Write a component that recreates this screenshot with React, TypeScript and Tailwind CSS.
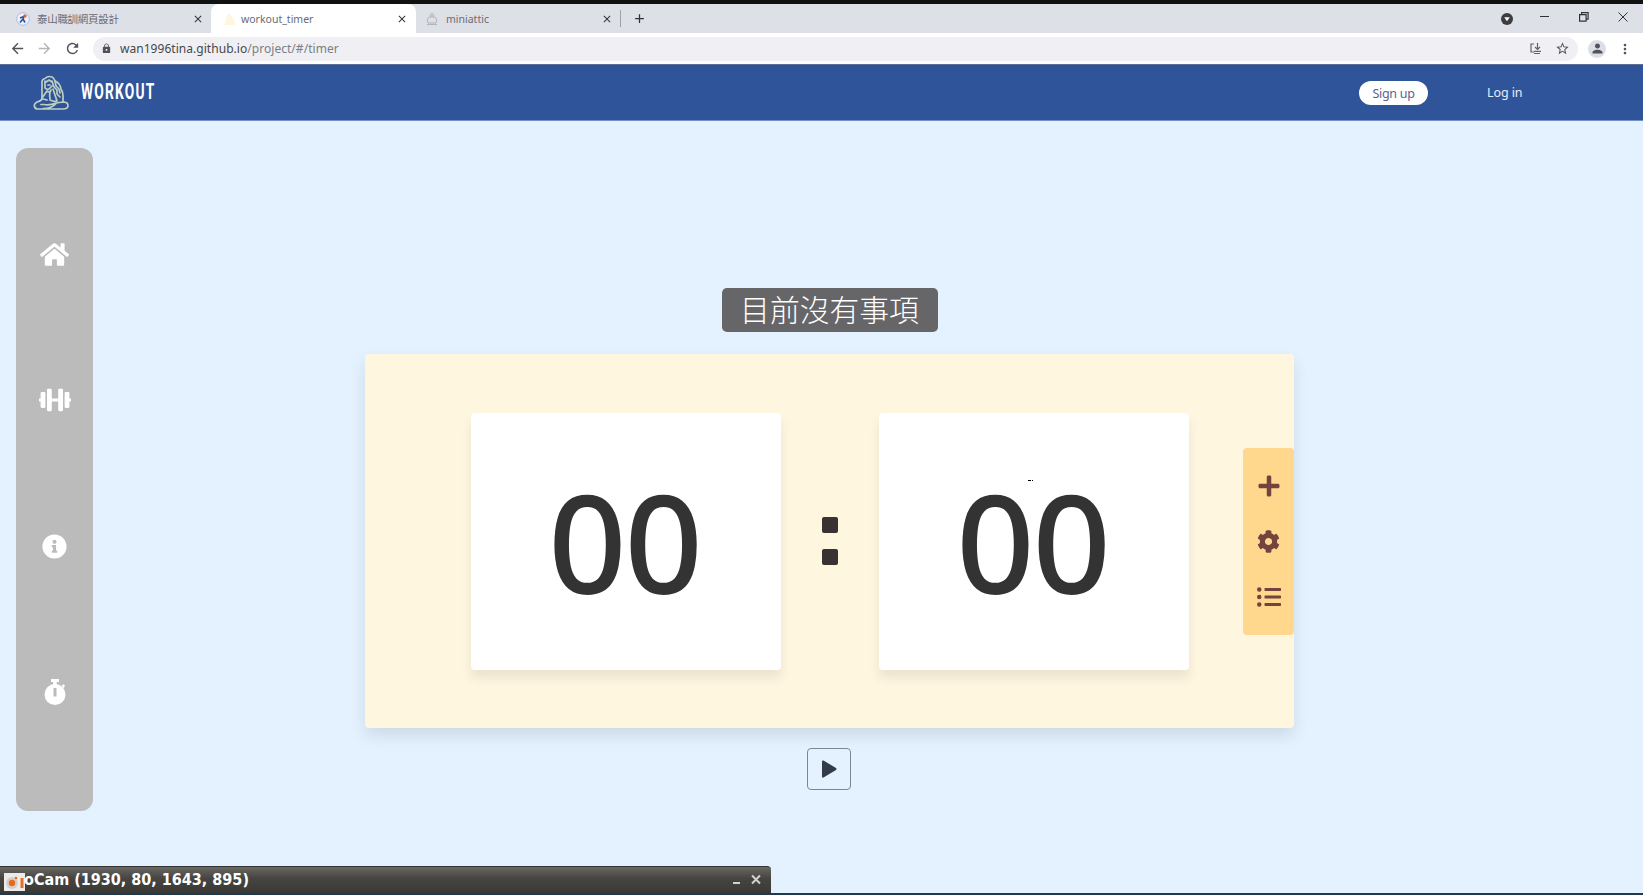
import React from 'react';
import { FaHome, FaDumbbell, FaInfoCircle, FaPlus, FaCog, FaListUl } from 'react-icons/fa';
import { MdArrowBack, MdArrowForward, MdRefresh, MdLock, MdStarBorder, MdPerson, MdMoreVert, MdClose, MdAdd } from 'react-icons/md';

const Stopwatch = () => (
  <svg width="22" height="26" viewBox="0 0 22 26" fill="#fff">
    <path d="M7 0h8v3h-2.200v3H9.200V3H7z" />
    <path d="M17.600 6.200l2.200-1 1.200 1.800-1.600 2.200z" />
    <path fillRule="evenodd" d="M11 5a10.500 10.500 0 1 1 0 21a10.500 10.500 0 1 1 0-21zM9.500 9v8.500h3V9z" />
  </svg>
);

const Logo = () => (
  <svg width="36" height="36" viewBox="0 0 36 36" fill="none" stroke="#bccfc0" strokeWidth="1.700" strokeLinecap="round" strokeLinejoin="round">
    <path d="M9 23V7q0-3 3-3.500Q15 .5 19 2q2 1 3 4 5 2 6 8 2 3 2 7v6" />
    <path d="M12 6v7q2 2 4 1l3-3M13 7l3-2 3 2M15 10h2M19 6l2 6 3 3v4l3 3M22 6l1 5 3 3 1 4" />
    <path d="M18 15q-2 3-1 9M9 23l5-7 2 1M20 14l4 12M17 25q4 2 7 1M10 24l4 1" />
    <path d="M9 24q-1 2-5 3-3.500 2-2.500 4.500Q2 34 5 34h25q5 0 5-3.500 0-3.500-5-3.500l-7 1q-6 2.500-12 1.500H8M10 33.500q9 0 13-5" />
  </svg>
);

const side = [
  <FaHome size={29} />,
  <FaDumbbell size={32} />,
  <FaInfoCircle size={25} />,
  <Stopwatch />,
];

const tabText = "font-['Noto_Sans','Noto_Sans_CJK_TC',sans-serif] pt-[2px] text-[10.500px] leading-none text-[#6b6b72]";

function TabStrip() {
  return (
    <div className="flex h-[29px] shrink-0 bg-[#dee0e7]">
      <div className="flex w-[211px] items-center pl-4 pr-[7px]">
        <svg width="14" height="14" viewBox="0 0 14 14">
          <circle cx="7" cy="7" r="6.300" fill="#eef1fa" stroke="#a9bce6" />
          <path d="M4 10.500L7 7l2 3.500M4 6l4-1.500L7 7" stroke="#34538f" strokeWidth="1.600" fill="none" />
          <circle cx="9" cy="4" r="1.700" fill="#e2643b" />
        </svg>
        <span className={`${tabText} ml-[7px] flex-1 tracking-[-0.300px]`}>泰山職訓網頁設計</span>
        <MdClose size={12} className="text-[#333]" />
      </div>
      <div className="flex w-[205px] items-center rounded-t-lg bg-white pl-3 pr-2">
        <svg width="14" height="14" viewBox="0 0 14 14" fill="#fff6e0"><path d="M2 13V9l3-8 3 2 4 7v3z" /></svg>
        <span className={`${tabText} ml-1 flex-1`}>workout_timer</span>
        <MdClose size={12} className="text-[#333]" />
      </div>
      <div className="flex w-[204px] items-center pl-[10px] pr-[7px]">
        <svg width="12" height="14" viewBox="0 0 12 14" fill="none" stroke="#b3b3ba"><path d="M1 12.500h10M2 11q-2-4 1-6h6q3 2 1 6zM6 1L4 4h4z" /></svg>
        <span className={`${tabText} ml-2 flex-1`}>miniattic</span>
        <MdClose size={12} className="text-[#333]" />
      </div>
      <div className="h-[17px] w-px self-center bg-[#a0a0a8]" />
      <div className="flex flex-1 items-center pl-[11px]">
        <MdAdd size={15} className="text-[#333]" />
      </div>
      <div className="flex items-center pr-[15px] text-[#333]">
        <svg width="12" height="12" viewBox="0 0 12 12"><circle cx="6" cy="6" r="6" fill="#3c3c40" /><path d="M3.200 4.300h5.600L6 8.200z" fill="#fff" /></svg>
        <svg className="ml-[27px] mb-1" width="9" height="9" viewBox="0 0 9 9" stroke="#333"><path d="M0 4.500h9" /></svg>
        <svg className="ml-[30px] mb-1" width="10" height="10" viewBox="0 0 10 10" fill="none" stroke="#333" strokeWidth="1.200"><path d="M.6 2.600h6.500v6.500H.6zM2.600 2.500V.6h6.500v6.500H7.200" /></svg>
        <svg className="ml-[29px] mb-1" width="10" height="10" viewBox="0 0 10 10" stroke="#333"><path d="M.5.5l9 9M9.500.5l-9 9" /></svg>
      </div>
    </div>
  );
}

function AddressBar() {
  return (
    <div className="flex h-[31px] shrink-0 items-center bg-white pl-[9px] pr-[10px] text-[#505357]">
      <MdArrowBack size={17} />
      <MdArrowForward size={17} className="ml-[10px] text-[#b4b6ba]" />
      <MdRefresh size={17} className="ml-[11px]" />
      <div className="ml-[12px] flex h-[24px] flex-1 items-center rounded-full bg-[#f0f0f4] pl-[8px] pr-[8px]">
        <MdLock size={11} />
        <span className="ml-[8px] mt-px flex-1 font-['Noto_Sans',sans-serif] text-[12px] leading-none tracking-[0.040px] text-[#45474b]">
          wan1996tina.github.io<span className="text-[#7c7e83]">/project/#/timer</span>
        </span>
        <svg width="12" height="12" viewBox="0 0 12 12" fill="none" stroke="#606367" strokeWidth="1.200"><path d="M4 1H1v8h3M7.500 0v6M5 4l2.500 2.500L10 4M4 8.300h7M4 10.500h6" /></svg>
        <MdStarBorder size={15} className="ml-[13px]" />
      </div>
      <div className="ml-[10px] flex h-[18px] w-[18px] items-center justify-center rounded-full bg-[#dcdee5]">
        <MdPerson size={15} />
      </div>
      <MdMoreVert size={16} className="ml-[11px]" />
    </div>
  );
}

function Navbar() {
  return (
    <header className="flex h-[57px] shrink-0 items-center border-y border-t-[#5d6f98] border-b-[#6f8fc6] bg-[#30549a] pl-[33px] font-['Noto_Sans',sans-serif]">
      <Logo />
      <div className="ml-3 w-[1278px]">
        <div className="w-[90px] origin-left scale-x-[0.640] pb-[2px] font-['Roboto',sans-serif] text-[21.500px] font-bold leading-none tracking-[1.900px] text-white">WORKOUT</div>
      </div>
      <button className="mt-px flex h-[24px] w-[69px] items-center justify-center rounded-full bg-white pt-[2px] text-[12.500px] leading-none tracking-[-0.300px] text-[#5a6290]">Sign up</button>
      <span className="ml-[59px] mt-px text-[12.500px] leading-none tracking-[-0.100px] text-[#e6edf8]">Log in</span>
    </header>
  );
}

function Digits({ value }: { value: string }) {
  return (
    <div className="flex h-[257px] w-[310px] items-center justify-center rounded bg-white pr-[3px] shadow-[0_8px_12px_rgba(0,0,0,0.080)]">
      <span className="font-['Noto_Sans',sans-serif] text-[137px] font-medium leading-none tracking-[-2.100px] text-[#333]">{value}</span>
    </div>
  );
}

function Timer() {
  return (
    <section className="flex w-[929px] flex-col items-center">
      <div className="flex h-[44px] w-[216px] items-center justify-center rounded-[5px] bg-[#666668] pb-[3px] font-['Noto_Sans_CJK_TC',sans-serif] text-[29.800px] font-light leading-none text-white">目前沒有事項</div>
      <div className="mt-[22px] flex h-[374px] w-full items-center rounded bg-[#fff6e0] pl-[106px] shadow-[0_8px_16px_rgba(0,0,0,0.100)]">
        <Digits value="00" />
        <div className="flex w-[98px] flex-col items-center gap-[16px] pb-px">
          <div className="h-4 w-4 rounded-[2px] bg-[#383232]" />
          <div className="h-4 w-4 rounded-[2px] bg-[#383232]" />
        </div>
        <Digits value="00" />
        <div className="ml-auto flex h-[187px] w-[51px] flex-col items-center justify-between rounded bg-[#ffd78d] py-[26px] text-[#74433d]">
          <FaPlus size={24} />
          <FaCog size={23} />
          <FaListUl size={24} />
        </div>
      </div>
      <button className="mr-px mt-5 flex h-[42px] w-[44px] items-center justify-center rounded border border-[#7b8794]">
        <svg width="15" height="18" viewBox="0 0 15 18" fill="#323b48"><path d="M0 1.500Q0 0 1.500.5L14 8q1 1 0 2L1.500 17.500Q0 18 0 16.500z" /></svg>
      </button>
    </section>
  );
}

export default function App() {
  return (
    <div className="relative flex h-[895px] w-[1643px] flex-col overflow-hidden border-b-2 border-[#22384d] bg-[#e4f2ff]">
      <div className="h-1 shrink-0 bg-[#111]" />
      <TabStrip />
      <AddressBar />
      <Navbar />
      <main className="flex flex-1 pl-4 pt-[27px]">
        <nav className="flex h-[663px] w-[77px] flex-col items-center rounded-xl bg-[#bbb] pt-[33px] text-white">
          {side.map((icon, i) => (
            <a key={i} className="flex h-[146px] items-center">{icon}</a>
          ))}
        </nav>
        <div className="ml-[272px] mt-[140px]">
          <Timer />
        </div>
      </main>
      <div className="absolute left-[1028px] top-[480px] flex gap-px">
        <i className="h-px w-[3px] bg-black" />
        <i className="h-px w-px bg-black" />
      </div>
      <div className="absolute bottom-[-2px] left-0 flex h-[29px] w-[771px] items-center rounded-tr border-t border-[#333] bg-linear-to-b from-[#6a6863] via-[#464541] via-40% to-[#383733] pb-[2px] pl-1 pr-[10px]">
        <svg width="21" height="18" viewBox="0 0 21 18" className="mt-1 shrink-0">
          <path d="M0 0h21v18H0z" fill="#ecebe9" />
          <circle cx="8" cy="10" r="6" fill="#d0cfcd" />
          <circle cx="8" cy="10" r="3.200" fill="#e8691b" />
          <circle cx="12" cy="5" r="1.300" fill="#e8691b" />
          <path d="M16.500 5h3v10h-3z" fill="#e87025" />
        </svg>
        <span className="-ml-px flex-1 font-['DejaVu_Sans_Condensed','DejaVu_Sans',sans-serif] text-[16px] font-bold leading-none text-white font-stretch-condensed">oCam (1930, 80, 1643, 895)</span>
        <svg width="28" height="12" viewBox="0 0 28 12" stroke="#d2d1ce" strokeWidth="2" fill="none"><path d="M0 9h7M19 1.500l8 8M27 1.500l-8 8" /></svg>
      </div>
    </div>
  );
}
